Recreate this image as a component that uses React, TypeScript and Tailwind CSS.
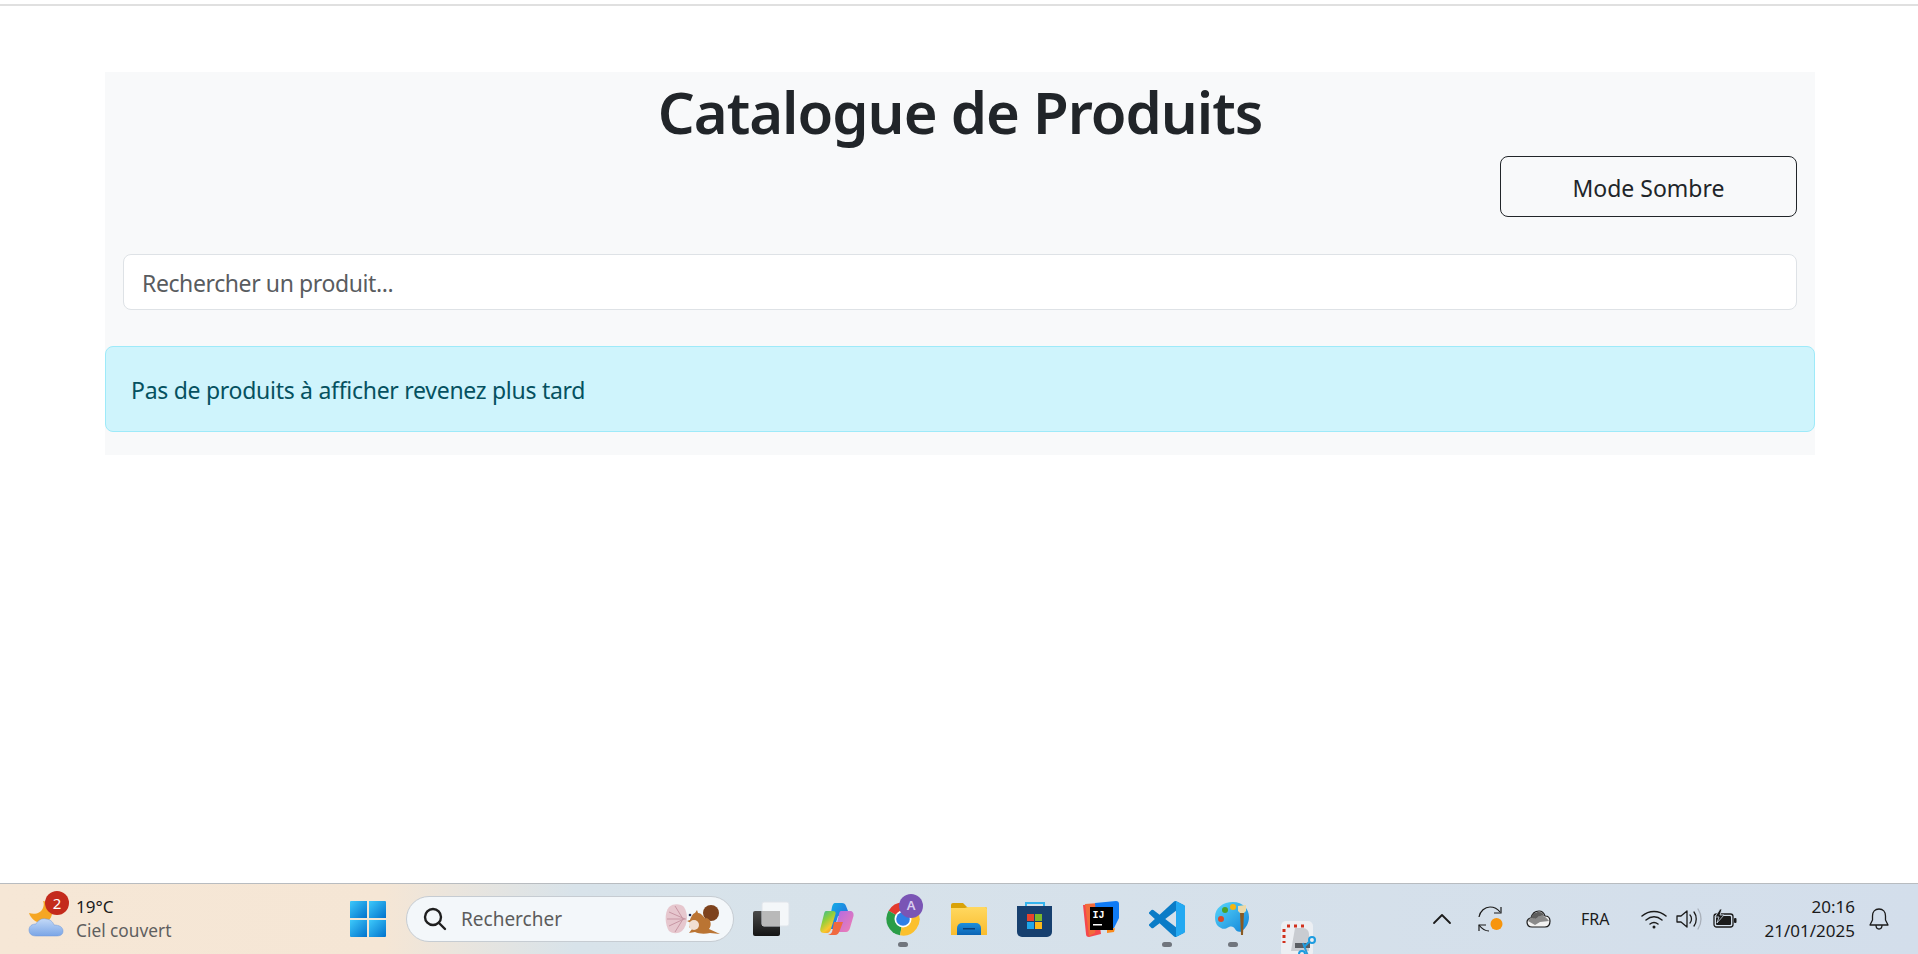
const trayStroke = '#1b1b1b';

const WeatherIcon = () => (
  <div className="relative w-[40px] h-[44px]">
    <svg width="40" height="44" viewBox="0 0 40 44">
      <defs>
        <linearGradient id="cloud" x1="0" y1="0" x2="0" y2="1">
          <stop offset="0" stopColor="#c3d9f7" />
          <stop offset="1" stopColor="#7aa5e6" />
        </linearGradient>
      </defs>
      <path d="M1 16c6 2 12 0 14-5 1-3 1-5 0-7 6 1 10 6 9 13-1 5-4 8-9 9-7 0-12-4-14-10z" fill="#f5a623" />
      <path d="M8 39c-5 0-7-3-7-6 0-4 3-6 7-6 2-4 6-6 10-5 4 0 7 3 8 6 5 0 9 2 9 6s-3 5-7 5H8z" fill="url(#cloud)" stroke="#6d97d8" strokeWidth="0.5" />
    </svg>
    <span className="absolute left-[17px] top-[-6px] flex h-[24px] w-[24px] items-center justify-center rounded-full bg-[#c42b1c] text-[15px] text-white">2</span>
  </div>
);

const WindowsLogo = () => (
  <svg width="36" height="36" viewBox="0 0 36 36">
    <defs>
      <linearGradient id="win" x1="0" y1="0" x2="1" y2="1">
        <stop offset="0" stopColor="#3dc9fb" />
        <stop offset="1" stopColor="#0272cc" />
      </linearGradient>
    </defs>
    <path d="M1 0h16v17H0V1a1 1 0 0 1 1-1z" fill="url(#win)" />
    <path d="M19 0h16a1 1 0 0 1 1 1v16H19z" fill="url(#win)" />
    <path d="M0 19h17v17H1a1 1 0 0 1-1-1z" fill="url(#win)" />
    <path d="M19 19h17v16a1 1 0 0 1-1 1H19z" fill="url(#win)" />
  </svg>
);

const SearchGlyph = () => (
  <svg width="24" height="24" viewBox="0 0 24 24" fill="none" stroke="#1f1f1f" strokeWidth="2.4" strokeLinecap="round">
    <circle cx="10" cy="10" r="8" />
    <path d="M16 16l6 6" />
  </svg>
);

const SquirrelDoodle = () => (
  <svg width="58" height="32" viewBox="0 0 56 32">
    <path d="M4 4c5-4 12-3 15 0 2 3 3 7 3 11 0 5-2 10-5 13-4 3-9 3-13 0-4-6-5-18 0-24z" fill="#e6c7ce" />
    <path d="M4 9l16 7M2 16h19M4 23l15-7M10 3l8 13M10 29l8-13" stroke="#c897a4" strokeWidth="1" />
    <circle cx="46" cy="10" r="8" fill="#7d421d" />
    <path d="M41 15c5 1 6 7 3 11l11 5-10-1c-5 1-11 1-15-1l-6 1 3-4-3-2 2-4-4-2 3-1c1-3 3-7 5-7l2-3 1 3c4 0 6 5 8 6z" fill="#ba7433" />
    <ellipse cx="29" cy="22" rx="5" ry="5" fill="#f1dfd2" />
    <circle cx="25" cy="12" r="1.300" fill="#1f2a55" />
  </svg>
);

const TaskView = () => (
  <svg width="38" height="36" viewBox="0 0 38 36">
    <defs>
      <linearGradient id="tvDark" x1="0" y1="0" x2="0" y2="1">
        <stop offset="0" stopColor="#4a4a4a" />
        <stop offset="1" stopColor="#141414" />
      </linearGradient>
    </defs>
    <rect x="1" y="10" width="27" height="25" rx="2" fill="url(#tvDark)" />
    <rect x="10" y="1" width="27" height="24" rx="2" fill="#ffffff" fillOpacity="0.72" stroke="#dfe4ea" />
    <rect x="10" y="10" width="18" height="15" fill="#b9b9b9" />
  </svg>
);

const Copilot = () => (
  <svg width="34" height="32" viewBox="0 0 34 32">
    <defs>
      <linearGradient id="copA" x1="0" y1="0" x2="1" y2="1">
        <stop offset="0" stopColor="#12b5e8" />
        <stop offset="1" stopColor="#2b55d8" />
      </linearGradient>
      <linearGradient id="copB" x1="0" y1="0" x2="0.6" y2="1">
        <stop offset="0" stopColor="#2fb8a0" />
        <stop offset="0.45" stopColor="#8fcf3c" />
        <stop offset="0.8" stopColor="#f8c92e" />
        <stop offset="1" stopColor="#f59a2c" />
      </linearGradient>
      <linearGradient id="copC" x1="0" y1="0" x2="1" y2="1">
        <stop offset="0" stopColor="#b06ae6" />
        <stop offset="1" stopColor="#f47fb0" />
      </linearGradient>
    </defs>
    <path d="M15 0h7c2 0 3.500 1 4 3l4 10H18l-4 13H8l4-22c.5-2 1.500-4 3-4z" fill="url(#copA)" />
    <path d="M6 8h7c2 0 3 1 2.500 3L11 26c-.5 2-2 4-4 4H4c-3 0-4.500-2-3.500-5L4 11c.5-2 1-3 2-3z" fill="url(#copB)" />
    <path d="M21 8h9c2.500 0 4 2 3.500 5L30 25c-.5 2-2 4-4 4h-8c-2 0-3-1-2.500-3L19 11c.5-2 1-3 2-3z" fill="url(#copC)" />
    <path d="M14 19h9l-3 8c-1 3-2.500 5-5 5H8c3-1 4-2 4.500-5z" fill="#f0693f" />
  </svg>
);

const ChromeIcon = () => (
  <div className="relative h-[36px] w-[36px]">
    <svg width="36" height="36" viewBox="0 0 36 36">
      <path d="M18 18L3.600 9.700A16.500 16.500 0 0 1 32.400 10z" fill="#e33b2e" />
      <path d="M18 18L3.600 9.700A16.500 16.500 0 0 0 15 34.300z" fill="#2a9d47" />
      <path d="M18 18l14.400-8A16.500 16.500 0 0 1 15 34.300z" fill="#fbc02d" />
      <circle cx="18" cy="18" r="8.500" fill="#fff" />
      <circle cx="18" cy="18" r="6.800" fill="#2f7fe6" />
    </svg>
    <span className="absolute left-[14px] top-[-7px] flex h-[24px] w-[24px] items-center justify-center rounded-full bg-[#7a55b5] text-[13px] font-semibold text-[#d9cdf0]">A</span>
  </div>
);

const FolderIcon = () => (
  <svg width="36" height="32" viewBox="0 0 36 32">
    <defs>
      <linearGradient id="folder" x1="0" y1="0" x2="0" y2="1">
        <stop offset="0" stopColor="#ffd860" />
        <stop offset="1" stopColor="#f9bc2e" />
      </linearGradient>
      <linearGradient id="folderBlue" x1="0" y1="0" x2="0" y2="1">
        <stop offset="0" stopColor="#1e8fdc" />
        <stop offset="1" stopColor="#0a63b4" />
      </linearGradient>
    </defs>
    <path d="M0 2a2 2 0 0 1 2-2h10l4 4h18a2 2 0 0 1 2 2v4H0z" fill="#d9a209" />
    <path d="M0 5h14l3-1h17a2 2 0 0 1 2 2v26H0z" fill="url(#folder)" />
    <path d="M6 32V25a5 5 0 0 1 5-5h14a5 5 0 0 1 5 5v7z" fill="url(#folderBlue)" />
    <rect x="12" y="25" width="12" height="1.500" fill="#0a3f78" />
  </svg>
);

const StoreIcon = () => (
  <svg width="36" height="36" viewBox="0 0 36 36">
    <path d="M9 6V2h18v4" fill="none" stroke="#34b4ee" strokeWidth="2" />
    <path d="M0 5h35v26a5 5 0 0 1-5 5H5a5 5 0 0 1-5-5z" fill="#17406f" />
    <rect x="10" y="13" width="7" height="7" fill="#e8432c" />
    <rect x="18" y="13" width="7" height="7" fill="#7cb82b" />
    <rect x="10" y="21" width="7" height="7" fill="#1ea6ea" />
    <rect x="18" y="21" width="7" height="7" fill="#fbb91a" />
  </svg>
);

const IdeaIcon = () => (
  <svg width="36" height="36" viewBox="0 0 36 36">
    <path d="M0 4l14-1 4 30-12 3c-2 0-3-1-3-3z" fill="#f5474c" />
    <path d="M2 3l14-1-4 30-6 3z" fill="#f26b3a" />
    <path d="M12 2l21-2c2 0 3 1 3 3v14l-5 10H14z" fill="#0f7bf5" />
    <path d="M24 28l8-1 1-4-2 8-7 1z" fill="#fa8a1c" />
    <rect x="7" y="6" width="23" height="23" fill="#000" />
    <text x="9.500" y="17" fontSize="10" fontWeight="700" fill="#fff" fontFamily="'Liberation Mono', monospace">IJ</text>
    <rect x="10" y="23" width="9" height="1.500" fill="#fff" />
  </svg>
);

const VsCode = () => (
  <svg width="36" height="36" viewBox="0 0 24 24">
    <path fill="#0a7cc7" d="M23.150 2.587L18.210.21a1.494 1.494 0 0 0-1.705.29l-9.460 8.630-4.120-3.128a.999.999 0 0 0-1.276.057L.327 7.261A1 1 0 0 0 .326 8.740L3.899 12 .326 15.260a1 1 0 0 0 .001 1.479L1.650 17.940a.999.999 0 0 0 1.276.057l4.120-3.128 9.460 8.630a1.492 1.492 0 0 0 1.704.290l4.942-2.377A1.500 1.500 0 0 0 24 20.060V3.939a1.500 1.500 0 0 0-.850-1.352zm-5.146 14.861L10.826 12l7.178-5.448v10.896z" />
    <path fill="#23a9f2" d="M18.004 0.080c.07 0 .14.050.206.130l4.940 2.377A1.500 1.500 0 0 1 24 3.939V20.060a1.500 1.500 0 0 1-.850 1.352l-4.942 2.377a1.500 1.500 0 0 1-.204.080V0.080z" />
  </svg>
);

const PaintIcon = () => (
  <svg width="36" height="36" viewBox="0 0 36 36">
    <defs>
      <linearGradient id="pal" x1="0" y1="0" x2="1" y2="1">
        <stop offset="0" stopColor="#58d6fb" />
        <stop offset="1" stopColor="#1284d8" />
      </linearGradient>
    </defs>
    <path d="M18 1c10 0 16 7 16 15 0 6-3 11-7 14-3 2-6 0-7-2s-3-3-6-2c-2 1-5 3-8 1C1 25 0 20 0 16 0 7 8 1 18 1z" fill="url(#pal)" />
    <circle cx="10" cy="9" r="3" fill="#4aa128" />
    <circle cx="18" cy="6" r="3" fill="#f6b50f" />
    <circle cx="6" cy="18" r="3" fill="#d8492a" />
    <path d="M25 11h4l-1 23h-2z" fill="#8a5a22" />
    <path d="M23 5l8-1 0 6-2 2h-4l-2-2z" fill="#ecd9a8" />
  </svg>
);

const SnipIcon = () => (
  <svg width="40" height="36" viewBox="0 0 40 36">
    <rect x="0" y="0" width="32" height="36" rx="5" fill="#eceff3" />
    <path d="M14 7h8a6 6 0 0 1 6 6v17H10" fill="#c9ccd1" />
    <path d="M6 5h3M13 5h3M20 5h3M3 8v3M3 14v3M3 20v2" stroke="#d1301c" strokeWidth="3" />
    <rect x="14" y="22" width="15" height="5" fill="#5a5d62" />
    <path d="M22 22l5 13" stroke="#2a9bd8" strokeWidth="2" />
    <circle cx="31" cy="19" r="3" fill="none" stroke="#1c9ce0" strokeWidth="2" />
    <path d="M28 21l-5 5" stroke="#1c9ce0" strokeWidth="2" />
    <circle cx="21" cy="33" r="3" fill="none" stroke="#1c9ce0" strokeWidth="2" />
  </svg>
);

const Chevron = () => (
  <svg width="24" height="14" viewBox="0 0 24 14" fill="none" stroke={trayStroke} strokeWidth="1.800" strokeLinecap="round" strokeLinejoin="round">
    <path d="M4 11l8-8 8 8" />
  </svg>
);

const SyncIcon = () => (
  <svg width="26" height="26" viewBox="0 0 26 26" fill="none" stroke={trayStroke} strokeWidth="1.200">
    <path d="M1 11C2 5 7 1 12 1c4 0 7 1 10 5" />
    <path d="M23 1v6h-7" />
    <path d="M1 25v-6h7" />
    <path d="M1 19c3 4 6 6 10 6" />
    <circle cx="18.500" cy="18" r="6" fill="#f7950d" stroke="none" />
  </svg>
);

const OneDriveIcon = () => (
  <svg width="25" height="18" viewBox="0 0 25 18">
    <path d="M6 17c-3 0-5-2-5-5 0-2 2-4 4-4 1-4 4-7 8-7 3 0 5 2 6 5 3 0 5 2 5 5 0 4-2 6-5 6z" fill="#f2f2f2" stroke="#1b1b1b" strokeWidth="1.200" />
    <path d="M2 11c2-4 5-4 8-2 3-5 9-4 13 2l-9 1-5 3z" fill="#8a8a8a" />
    <path d="M5 8c1-4 4-6 8-6 3 0 5 2 5 4-3-1-6 0-8 3-2-1-3-1-5-1z" fill="#5e5e5e" />
  </svg>
);

const WifiIcon = () => (
  <svg width="26" height="20" viewBox="0 0 26 20" fill="none" stroke={trayStroke} strokeWidth="1.500" strokeLinecap="round">
    <path d="M1 7c7-6 17-6 24 0" />
    <path d="M5 11c5-4 11-4 16 0" />
    <path d="M9 15c2.500-2 5.500-2 8 0" />
    <circle cx="13" cy="18" r="1.500" fill={trayStroke} stroke="none" />
  </svg>
);

const VolumeIcon = () => (
  <svg width="26" height="22" viewBox="0 0 26 22" fill="none" stroke={trayStroke} strokeWidth="1.300" strokeLinejoin="round">
    <path d="M1 8v6h4l6 5V3L5 8z" />
    <path d="M14 7c2 2 2 6 0 8" strokeLinecap="round" />
    <path d="M18 4c3 4 3 10 0 14" strokeLinecap="round" />
    <path d="M22 1c4 6 4 14 0 20" stroke="#a9b0ba" strokeLinecap="round" />
  </svg>
);

const BatteryIcon = () => (
  <svg width="24" height="20" viewBox="0 0 24 20">
    <rect x="1" y="5" width="19" height="13" rx="2.500" fill="none" stroke={trayStroke} strokeWidth="1.300" />
    <rect x="3" y="7" width="15" height="9" rx="1" fill={trayStroke} />
    <rect x="21" y="9" width="2.500" height="5" rx="1" fill={trayStroke} />
    <path d="M7 0L2 8h4l-2 6 7-8H7l2-6z" fill={trayStroke} stroke="#d3deeb" strokeWidth="0.800" />
  </svg>
);

const BellIcon = () => (
  <svg width="20" height="22" viewBox="0 0 20 22" fill="none" stroke={trayStroke} strokeWidth="1.300" strokeLinejoin="round">
    <path d="M10 1c-4 0-6.500 3-6.500 7v4L1 17h18l-2.500-5V8C16.500 4 14 1 10 1z" />
    <path d="M7 17c0 2.500 1.500 4 3 4s3-1.500 3-4" />
  </svg>
);

const Dot = () => <span className="absolute bottom-[7px] left-1/2 h-[5px] w-[10px] -translate-x-1/2 rounded-full bg-[#70757d]" />;

const taskIcons = [
  { key: 'task', icon: <TaskView /> },
  { key: 'copilot', icon: <Copilot /> },
  { key: 'chrome', icon: <ChromeIcon />, running: true },
  { key: 'folder', icon: <FolderIcon /> },
  { key: 'store', icon: <StoreIcon /> },
  { key: 'idea', icon: <IdeaIcon /> },
  { key: 'vscode', icon: <VsCode />, running: true },
  { key: 'paint', icon: <PaintIcon />, running: true },
];

const Taskbar = () => (
  <footer className="flex h-[71px] shrink-0 items-center overflow-hidden border-t-[1.5px] border-[#b8bcc0] bg-[linear-gradient(90deg,#f6e7d6_0%,#f5e6d5_20%,#d8e3ea_30%,#d3deeb_100%)] font-['Noto_Sans',sans-serif] text-[#1b1b1b]">
    <div className="flex w-[350px] items-center pl-[28px]">
      <WeatherIcon />
      <div className="ml-[8px] leading-[24px]">
        <div className="text-[17px]">19°C</div>
        <div className="text-[17.3px] text-[#5f5f5f]">Ciel couvert</div>
      </div>
    </div>
    <WindowsLogo />
    <div className="ml-[20px] flex h-[46px] w-[328px] items-center rounded-full border border-[#c6ccd2] bg-[#f3f7fa] pl-[16px] pr-[11px]">
      <SearchGlyph />
      <span className="ml-[14px] text-[19px] text-[#5c5c5c]">Rechercher</span>
      <span className="ml-auto"><SquirrelDoodle /></span>
    </div>
    <div className="ml-[4px] flex">
      {taskIcons.map((item) => (
        <div key={item.key} className="relative flex h-[70px] w-[66px] items-center justify-center">
          {item.icon}
          {item.running ? <Dot /> : null}
        </div>
      ))}
      <div className="flex h-[70px] w-[66px] items-start justify-center pl-[3px] pt-[37px]">
        <SnipIcon />
      </div>
    </div>
    <div className="ml-auto flex items-center pr-[29px]">
      <Chevron />
      <span className="ml-[24px]"><SyncIcon /></span>
      <span className="ml-[22px]"><OneDriveIcon /></span>
      <span className="ml-[30px] text-[16px]">FRA</span>
      <span className="ml-[31px]"><WifiIcon /></span>
      <span className="ml-[9px]"><VolumeIcon /></span>
      <span className="ml-[11px]"><BatteryIcon /></span>
      <div className="ml-[28px] text-right text-[17px] leading-[24px]">
        <div>20:16</div>
        <div>21/01/2025</div>
      </div>
      <span className="ml-[14px]"><BellIcon /></span>
    </div>
  </footer>
);

export default function App() {
  return (
    <div className="flex h-[954px] flex-col overflow-hidden bg-white font-['Noto_Sans',sans-serif] text-[#212529]">
      <div className="mt-[4px] h-[2px] shrink-0 bg-[#e0e0e0]" />
      <main className="flex-1 pl-[105px] pr-[103px] pt-[66px]">
        <section className="bg-[#f8f9fa] pb-[23px]">
          <h1 className="pt-[6px] text-center text-[58px] font-semibold leading-[67px] tracking-[-1px]">Catalogue de Produits</h1>
          <div className="mt-[11px] flex justify-end pr-[18px]">
            <button className="h-[61px] w-[297px] rounded-[8px] border border-[#212529] pt-[3px] text-[23px]">Mode Sombre</button>
          </div>
          <div className="mx-[18px] mt-[37px]">
            <input
              placeholder="Rechercher un produit..."
              className="h-[56px] w-full rounded-[8px] border border-[#dee2e6] bg-white px-[18px] pt-[2px] text-[23px] tracking-[-0.4px] placeholder:text-[#595c5f]"
            />
          </div>
          <div className="mt-[36px] flex h-[86px] items-center rounded-[8px] border border-[#9eeaf9] bg-[#cff4fc] px-[25px] pt-[3px] text-[23px] tracking-[-0.28px] text-[#055160]">
            Pas de produits à afficher revenez plus tard
          </div>
        </section>
      </main>
      <Taskbar />
    </div>
  );
}
